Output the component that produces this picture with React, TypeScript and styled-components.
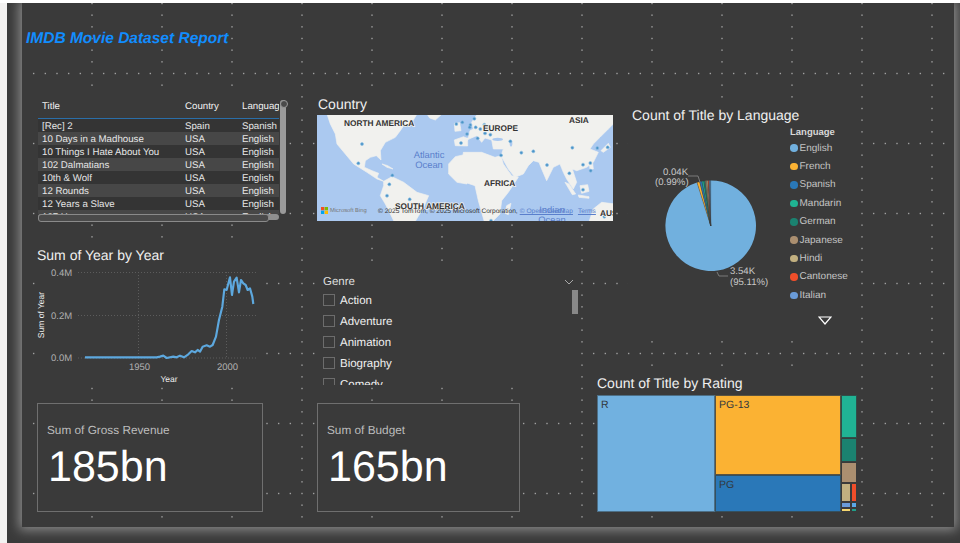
import React from 'react';
import styled, { createGlobalStyle } from 'styled-components';

const GlobalStyle = createGlobalStyle`
  html, body { margin: 0; padding: 0; background: #fff; }
  body { font-family: "Liberation Sans", Arial, sans-serif; text-rendering: geometricPrecision; }
  * { box-sizing: border-box; }
`;

const Page = styled.div`width: 960px; height: 543px; padding-top: 3px; background: #fff; overflow: hidden;`;
const Shell = styled.div`display: flex; height: 540px; padding-left: 7px; background: #f3f2f1;`;
const Stage = styled.div`flex: 1; padding-left: 15px; background: #3a3a3a; overflow: hidden;`;
const Canvas = styled.div`
  position: relative; width: 932px; height: 524px; background: #3a3a3a;
  box-shadow: 0 0 11px 3px #8c8c8c;
`;
const DotLayer = styled.svg`position: absolute; left: 0; top: 0;`;
const Header = styled.header`
  position: relative; height: 92px; padding: 26px 0 0 4px;
`;
const ReportTitle = styled.h1`
  margin: 0; font-size: 15.5px; line-height: 18px; font-weight: 700; font-style: italic; color: #118dff;
  padding-top: 1px;
`;
const Board = styled.main`
  position: relative; display: grid; padding-left: 15px;
  grid-template-columns: 280px 280px 16px 15px 232px;
  grid-template-rows: 12px 115px 25px 23px 61px 44px 10px 18px 109px;
  grid-template-areas:
    "t m m . ."
    "t m m . p"
    ". . . . p"
    "l . . . p"
    "l g . . p"
    "l g . . ."
    "l g r r r"
    ". . r r r"
    "a b r r r";
`;
const Visual = styled.section<{ $area: string; $width: number }>`
  position: relative; grid-area: ${p => p.$area}; width: ${p => p.$width}px; background: #3a3a3a; min-height: 0;
`;
const VisualTitle = styled.h2<{ $inset?: number }>`
  margin: 0; padding-left: ${p => p.$inset ?? 0}px; font-size: 14px; line-height: 16px; font-weight: 400; color: #f0f0f0; white-space: nowrap;
`;

/* Table */
const TableFrame = styled.div`height: 116px; margin: 3px 0 0 1px; width: 241px; overflow: hidden;`;
const TableRow = styled.div<{ $stripe?: boolean }>`
  display: grid; grid-template-columns: 143px 57px 41px; height: 13px; line-height: 13px;
  background: ${p => (p.$stripe ? '#474747' : '#343434')};
  font-size: 9.7px; color: #e6e6e6;
`;
const TableHead = styled(TableRow)`
  height: 21px; line-height: 15px; background: #3a3a3a; border-bottom: 1px solid #2a6ea8; color: #f0f0f0;
`;
const Cell = styled.div`padding: 1px 0 0 4px; white-space: nowrap; overflow: hidden;`;
const VScroll = styled.div`
  position: absolute; left: 243px; top: 5px; width: 6px; height: 114px; border-radius: 3px; background: #9a9a9a;
  &::before { content: ''; display: block; width: 6px; height: 6px; border-radius: 50%; background: #4a4a4a; border: 1px solid #999; }
`;
const HScroll = styled.div`
  position: absolute; left: 1px; top: 119px; width: 241px; height: 6px; border-radius: 3px; background: #8f8f8f;
  &::before { content: ''; display: block; width: 229px; height: 6px; border-radius: 3px; background: #4a4a4a; border: 1px solid #8a8a8a; }
`;

/* Map */
const MapTitleRow = styled.div`height: 20px; padding: 1px 0 0 1px;`;
const MapBox = styled.div`position: relative; width: 296px; height: 106px; overflow: hidden; background: #abc9f0;`;
const MapArt = styled.svg`display: block;`;
const MapLabel = styled.text`
  font-size: 8.3px; font-weight: 700; fill: #333; stroke: #f3f2ee; stroke-width: 1.4px; paint-order: stroke;
`;
const SeaLabel = styled.text`font-size: 9.4px; fill: #5a7fcc; text-anchor: middle;`;
const BingMark = styled.div`
  position: absolute; left: 4px; top: 92px; display: flex; align-items: center; gap: 2px;
  font-size: 5.8px; color: #777; white-space: nowrap;
`;
const Attribution = styled.div`
  position: absolute; left: 61px; top: 92px; display: flex; gap: 2px; height: 9px; line-height: 9px;
  font-size: 6.6px; color: #333; white-space: nowrap;
`;
const MapLink = styled.span<{ $gap?: number }>`color: #5a7fcc; text-decoration: underline; margin-left: ${p => p.$gap ?? 0}px;`;

/* Pie */
const PieBody = styled.div`display: flex; margin-top: 3px;`;
const PieArt = styled.svg`display: block; flex: none;`;
const PieText = styled.text`font-size: 9.6px; fill: #c8c8c8;`;
const Legend = styled.div`padding-left: 4px; flex: 1; display: flex; flex-direction: column;`;
const LegendTitle = styled.div`font-size: 9.5px; line-height: 12px; padding-top: 1px; height: 13px; font-weight: 700; color: #d8d8d8;`;
const LegendItem = styled.div`display: flex; align-items: center; gap: 2px; height: 18.4px; font-size: 10px; color: #c4c4c4;`;
const LegendDot = styled.span<{ $color: string }>`
  flex: none; width: 7.5px; height: 7.5px; border-radius: 50%; background: ${p => p.$color};
`;
const MoreButton = styled.svg`display: block; margin: 11px 0 0 28px;`;

/* Line */
const LineArt = styled.svg`display: block;`;
const AxisText = styled.text`font-size: 9.5px; fill: #b0b0b0; `;
const AxisName = styled.text`font-size: 8.5px; fill: #ececec; text-anchor: middle;`;

/* Genre */
const SlicerHead = styled.div`
  display: flex; justify-content: space-between; align-items: center; height: 19.5px; padding: 4px 6px 0 6px;
  font-size: 11.5px; color: #dedede;
`;
const SlicerList = styled.div`height: 95.5px; padding-left: 6px; overflow: hidden;`;
const SlicerItem = styled.div`display: flex; align-items: center; gap: 5px; height: 21px; font-size: 11.5px; color: #efefef;`;
const SlicerName = styled.span`padding-top: 2px;`;
const Check = styled.span`flex: none; width: 12px; height: 12px; border: 1px solid #6c6c6c;`;
const SlicerScroll = styled.div`position: absolute; left: 255px; top: 20px; width: 6px; height: 24px; background: #888;`;

/* Cards */
const Card = styled(Visual)`border: 1px solid #6f6f6f; padding: 19px 0 0 9px;`;
const CardLabel = styled.div`font-size: 11.8px; line-height: 14px; color: #bdbdbd;`;
const CardValue = styled.div`margin: 6px 0 0 1px; font-size: 43px; line-height: 48px; color: #fff;`;

/* Treemap */
const TreeWrap = styled.div`display: flex; width: 260px; height: 117px; margin-top: 4px;`;
const TreeCol = styled.div<{ $width: number }>`display: flex; flex-direction: column; flex: none; width: ${p => p.$width}px;`;
const TreeRow = styled.div<{ $height: number }>`display: flex; flex: none; height: ${p => p.$height}px;`;
const Tile = styled.div<{ $bg: string; $grow?: number; $edge?: string }>`
  flex: ${p => p.$grow ?? 1} 1 0; min-width: 0; min-height: 0; background: ${p => p.$bg};
  border: 1px solid ${p => p.$edge ?? '#3f4a52'}; overflow: hidden;
`;
const TileLabel = styled.div`margin: 3px; font-size: 10.5px; line-height: 12px; color: #33393e;`;

const rows = [
  ['[Rec] 2', 'Spain', 'Spanish'],
  ['10 Days in a Madhouse', 'USA', 'English'],
  ['10 Things I Hate About You', 'USA', 'English'],
  ['102 Dalmatians', 'USA', 'English'],
  ['10th & Wolf', 'USA', 'English'],
  ['12 Rounds', 'USA', 'English'],
  ['12 Years a Slave', 'USA', 'English'],
  ['127 Hours', 'USA', 'English'],
];

const legend: [string, string][] = [
  ['English', '#71b0de'], ['French', '#fbb233'], ['Spanish', '#2a78b8'], ['Mandarin', '#1fb392'], ['German', '#1b8270'],
  ['Japanese', '#ab8f70'], ['Hindi', '#c2b080'], ['Cantonese', '#f04e2a'], ['Italian', '#6a9bd8'],
];
const shares = [95.11, 0.99, 0.8, 0.65, 0.55, 0.5, 0.45, 0.35, 0.3, 0.3];
const pieColor = [...legend.map(l => l[1]), '#5ba8e8'];

function wedges(cx: number, cy: number, r: number) {
  let acc = 0;
  return shares.map(s => {
    const a0 = (acc / 100) * 2 * Math.PI;
    acc += s;
    const a1 = (acc / 100) * 2 * Math.PI;
    const p = (a: number) => `${cx + r * Math.sin(a)} ${cy - r * Math.cos(a)}`;
    return `M${cx} ${cy}L${p(a0)}A${r} ${r} 0 ${s > 50 ? 1 : 0} 1 ${p(a1)}Z`;
  });
}

const lineZoom = '195,352 410,352 420,350 430,347 440,354 460,350 470,352 480,347 492,352 505,343 515,333 525,337 533,330 540,335 548,320 560,316 570,320 578,315 588,290 597,240 607,200 613,148 620,150 630,112 636,165 642,125 650,113 657,157 663,120 670,130 677,135 683,150 690,145 697,170 700,192';

const dotsLeft = [[135, 90], [124, 148], [226, 184], [217, 211], [210, 245], [278, 256], [418, 30], [436, 25], [432, 87]];
const dotsRight = [[28, 14], [16, 33], [14, 40], [32, 40], [46, 45], [58, 32], [60, 58], [76, 62], [6, 60], [38, 73], [136, 82], [108, 124], [169, 116], [205, 112], [322, 101], [397, 102], [428, 100], [354, 152], [376, 147], [377, 170], [313, 178], [246, 153], [354, 227], [418, 308], [78, 320]];

function GridDots() {
  const marks: React.ReactElement[] = [];
  const step = 70 / 6;
  for (let line = 0; line < 14; line++) {
    for (let i = 0; i < 45; i++) {
      const x = 70 + line * 70;
      const y = i * step;
      if (x < 932 && y < 524) marks.push(<rect key={`v${line}-${i}`} x={x - 0.7} y={y - 0.2} width={1.4} height={1.4} />);
    }
  }
  for (let line = 0; line < 7; line++) {
    for (let i = 1; i < 80; i++) {
      const y = 70 + line * 70;
      const x = i * step;
      if (y < 524 && x < 932 && i % 6 !== 0) marks.push(<rect key={`h${line}-${i}`} x={x - 0.7} y={y - 0.2} width={1.4} height={1.4} />);
    }
  }
  return <DotLayer width={932} height={524} fill="#a0a0a0">{marks}</DotLayer>;
}

function WorldMap() {
  const land = '#f1f1ee';
  const sea = '#abc9f0';
  return (
    <MapArt width={296} height={106} viewBox="0 0 296 106">
      <defs>
        <filter id="soft"><feGaussianBlur stdDeviation="0.45" /></filter>
      </defs>
      <rect width={296} height={106} fill={sea} />
      <g filter="url(#soft)">
        <g transform="translate(0,-1) scale(0.3333)" fill={land} stroke={land} strokeWidth={2} strokeLinejoin="round">
          <polygon points="30,0 300,0 285,25 262,32 250,50 235,70 205,85 190,110 192,138 178,125 160,130 145,140 142,160 165,170 185,178 180,190 200,202 180,195 150,175 110,150 85,120 60,90 55,60 40,30" />
          <polygon points="200,202 225,188 260,205 300,235 335,245 320,280 290,330 235,330 205,270 190,245 200,215" />
          <polygon points="195,150 212,155 228,165 210,160" />
          <polygon points="330,0 375,0 355,18 338,12" />
          <polygon points="395,150 415,128 450,120 450,210 420,205 395,180" />
          <polygon points="415,95 412,78 440,68 452,75 452,96" />
          <polygon points="412,28 428,26 432,50 414,52" />
        </g>
        <g transform="translate(148,-1) scale(0.3333)" fill={land} stroke={land} strokeWidth={2} strokeLinejoin="round">
          <polygon points="-5,115 50,115 90,130 108,125 115,150 140,185 160,190 130,235 110,260 105,300 75,330 60,330 40,260 30,215 0,205 -10,190" />
          <polygon points="-5,92 -5,72 10,72 15,50 25,45 20,25 35,3 38,0 450,0 450,25 430,45 405,70 385,90 375,105 400,115 385,145 365,160 335,170 322,165 335,205 325,225 305,195 295,175 285,150 265,160 245,200 230,165 222,145 205,140 190,155 175,180 150,190 130,165 108,125 115,105 85,105 80,78 60,72 50,85 35,65 10,76" />
          <polygon points="300,205 312,210 332,240 322,242" />
          <polygon points="340,243 372,248 372,253 342,250" />
          <polygon points="345,215 368,212 372,232 350,238" />
          <polygon points="372,140 382,140 385,165 375,165" />
          <polygon points="430,88 436,100 415,115 408,110" />
          <polygon points="138,268 130,302 120,298 125,275" />
          <polygon points="370,330 385,285 410,265 450,270 450,330" />
          <ellipse cx={98} cy={76} rx={16} ry={5} fill={sea} stroke="none" />
          <ellipse cx={138} cy={88} rx={4} ry={10} fill={sea} stroke="none" />
        </g>
      </g>
      <g fill="#4a94c8" stroke="#8fc0e2" strokeWidth={0.6}>
        {dotsLeft.map(([x, y]) => <circle key={`l${x}-${y}`} cx={x / 3} cy={y / 3 - 1} r={1.5} />)}
        {dotsRight.map(([x, y]) => <circle key={`r${x}-${y}`} cx={x / 3 + 148} cy={y / 3 - 1} r={1.5} />)}
      </g>
      <SeaLabel x={112} y={43}>Atlantic</SeaLabel>
      <SeaLabel x={112} y={53}>Ocean</SeaLabel>
      <SeaLabel x={235} y={98}>Indian</SeaLabel>
      <SeaLabel x={235} y={108}>Ocean</SeaLabel>
      <MapLabel x={27} y={11}>NORTH AMERICA</MapLabel>
      <MapLabel x={166} y={16}>EUROPE</MapLabel>
      <MapLabel x={252} y={8}>ASIA</MapLabel>
      <MapLabel x={167} y={71}>AFRICA</MapLabel>
      <MapLabel x={78} y={94}>SOUTH AMERICA</MapLabel>
      <MapLabel x={283} y={101}>AUS</MapLabel>
    </MapArt>
  );
}

function BingLogo() {
  return (
    <svg width={7} height={7} viewBox="0 0 7 7">
      <rect width={3.3} height={3.3} fill="#f25022" />
      <rect x={3.7} width={3.3} height={3.3} fill="#7fba00" />
      <rect y={3.7} width={3.3} height={3.3} fill="#00a4ef" />
      <rect x={3.7} y={3.7} width={3.3} height={3.3} fill="#ffb900" />
    </svg>
  );
}

export default function App() {
  const paths = wedges(710.7, 225.7, 45.3);
  return (
    <Page>
      <GlobalStyle />
      <Shell>
        <Stage>
          <Canvas>
            <GridDots />
            <Header>
              <ReportTitle>IMDB Movie Dataset Report</ReportTitle>
            </Header>
            <Board>
              <Visual $area="t" $width={251}>
                <TableFrame>
                  <TableHead>
                    <Cell>Title</Cell><Cell>Country</Cell><Cell>Language</Cell>
                  </TableHead>
                  {rows.map((r, i) => (
                    <TableRow key={r[0]} $stripe={i % 2 === 1}>
                      <Cell>{r[0]}</Cell><Cell>{r[1]}</Cell><Cell>{r[2]}</Cell>
                    </TableRow>
                  ))}
                </TableFrame>
                <VScroll />
                <HScroll />
              </Visual>

              <Visual $area="m" $width={296}>
                <MapTitleRow><VisualTitle>Country</VisualTitle></MapTitleRow>
                <MapBox>
                  <WorldMap />
                  <BingMark><BingLogo />Microsoft Bing</BingMark>
                  <Attribution>
                    © 2025 TomTom, © 2025 Microsoft Corporation,
                    <MapLink>© OpenStreetMap</MapLink>
                    <MapLink $gap={3}>Terms</MapLink>
                  </Attribution>
                </MapBox>
              </Visual>

              <Visual $area="p" $width={232}>
                <VisualTitle $inset={4}>Count of Title by Language</VisualTitle>
                <PieBody>
                  <PieArt width={158} height={205} viewBox="628 126 158 205">
                    {paths.map((d, i) => (
                      <path key={i} d={d} fill={pieColor[i]} stroke="#3a3a3a" strokeWidth={i === 0 ? 0 : 0.35} />
                    ))}
                    <PieText x={663} y={175}>0.04K</PieText>
                    <PieText x={655} y={185}>(0.99%)</PieText>
                    <polyline points="688,176 698,176 700,182" fill="none" stroke="#8a8a8a" strokeWidth={0.8} />
                    <PieText x={730} y={274}>3.54K</PieText>
                    <PieText x={730} y={285}>(95.11%)</PieText>
                    <polyline points="717,272 719,276 728,276" fill="none" stroke="#8a8a8a" strokeWidth={0.8} />
                  </PieArt>
                  <Legend>
                    <LegendTitle>Language</LegendTitle>
                    {legend.map(([name, c]) => (
                      <LegendItem key={name}><LegendDot $color={c} />{name}</LegendItem>
                    ))}
                    <MoreButton width={14} height={9} viewBox="0 0 14 9">
                      <polygon points="1,1 13,1 7,8" fill="none" stroke="#fff" strokeWidth={1.2} />
                    </MoreButton>
                  </Legend>
                </PieBody>
              </Visual>

              <Visual $area="l" $width={228}>
                <VisualTitle>Sum of Year by Year</VisualTitle>
                <LineArt width={228} height={122} viewBox="37 263 228 122">
                  <g stroke="#5c5c5c" strokeWidth={1} strokeDasharray="1 2" fill="none">
                    <path d="M78 272.5H257M78 315.5H257M78 358H257" />
                    <path d="M138.5 272V358M226.5 272V358" />
                  </g>
                  <AxisText x={51} y={276}>0.4M</AxisText>
                  <AxisText x={51} y={319}>0.2M</AxisText>
                  <AxisText x={51} y={361}>0.0M</AxisText>
                  <AxisText x={129} y={370}>1950</AxisText>
                  <AxisText x={217} y={370}>2000</AxisText>
                  <AxisName x={169} y={382}>Year</AxisName>
                  <AxisName transform="translate(44,315) rotate(-90)">Sum of Year</AxisName>
                  <g transform="translate(20,240) scale(0.3333)">
                    <polyline points={lineZoom} fill="none" stroke="#5da8de" strokeWidth={6.5} strokeLinejoin="round" />
                  </g>
                </LineArt>
              </Visual>

              <Visual $area="g" $width={263}>
                <SlicerHead>
                  Genre
                  <svg width={10} height={6} viewBox="0 0 10 6">
                    <polyline points="1,1 5,5 9,1" fill="none" stroke="#a8a8a8" strokeWidth={1} />
                  </svg>
                </SlicerHead>
                <SlicerList>
                  {['Action', 'Adventure', 'Animation', 'Biography', 'Comedy'].map(g => (
                    <SlicerItem key={g}><Check /><SlicerName>{g}</SlicerName></SlicerItem>
                  ))}
                </SlicerList>
                <SlicerScroll />
              </Visual>

              <Card $area="a" $width={226}>
                <CardLabel>Sum of Gross Revenue</CardLabel>
                <CardValue>185bn</CardValue>
              </Card>
              <Card $area="b" $width={203}>
                <CardLabel>Sum of Budget</CardLabel>
                <CardValue>165bn</CardValue>
              </Card>

              <Visual $area="r" $width={263}>
                <VisualTitle>Count of Title by Rating</VisualTitle>
                <TreeWrap>
                  <TreeCol $width={118}><Tile $bg="#71b1e0" $edge="#4d6f86"><TileLabel>R</TileLabel></Tile></TreeCol>
                  <TreeCol $width={126}>
                    <Tile $bg="#fbb233" $grow={81} $edge="#5a5340"><TileLabel>PG-13</TileLabel></Tile>
                    <Tile $bg="#2a78b8" $grow={36} $edge="#34505f"><TileLabel>PG</TileLabel></Tile>
                  </TreeCol>
                  <TreeCol $width={16}>
                    <TreeRow $height={43}><Tile $bg="#20b394" $edge="#2f4f4a" /></TreeRow>
                    <TreeRow $height={24}><Tile $bg="#1b8270" $edge="#37403e" /></TreeRow>
                    <TreeRow $height={21}><Tile $bg="#ab8f70" $edge="#3a3a3a" /></TreeRow>
                    <TreeRow $height={19}>
                      <Tile $bg="#c2b080" $grow={10} $edge="#3a3a3a" />
                      <Tile $bg="#f04e2a" $grow={6} $edge="#3a3a3a" />
                    </TreeRow>
                    <TreeRow $height={6}>
                      <Tile $bg="#6a9bd8" $grow={11} $edge="#3a3a3a" />
                      <Tile $bg="#5ba8e8" $grow={5} $edge="#3a3a3a" />
                    </TreeRow>
                    <TreeRow $height={4}>
                      <Tile $bg="#f5d66f" $grow={11} $edge="#3a3a3a" />
                      <Tile $bg="#1fa08a" $grow={5} $edge="#3a3a3a" />
                    </TreeRow>
                  </TreeCol>
                </TreeWrap>
              </Visual>
            </Board>
          </Canvas>
        </Stage>
      </Shell>
    </Page>
  );
}
